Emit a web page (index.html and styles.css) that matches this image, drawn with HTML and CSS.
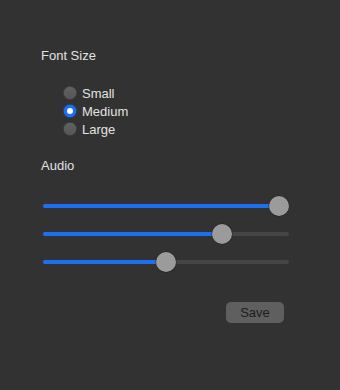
FILE: index.html
```html
<!DOCTYPE html>
<html lang="en">
  <head>
    <meta charset="UTF-8" />
    <meta name="viewport" content="width=device-width, initial-scale=1.0" />
    <title>Preferences</title>

    <link rel="stylesheet" href="styles.css">
  </head>
  <body>
    <div class="prefs">
      <h2 class="title">Font Size</h2>
      <div class="radios">
        <label class="radio"><span class="dot"></span>Small</label>
        <label class="radio checked"><span class="dot"></span>Medium</label>
        <label class="radio"><span class="dot"></span>Large</label>
      </div>

      <h2 class="title audio">Audio</h2>
      <div class="sliders">
        <div class="slider" style="--v: 1"><div class="track"><div class="fill"></div></div><div class="thumb"></div></div>
        <div class="slider" style="--v: 0.748"><div class="track"><div class="fill"></div></div><div class="thumb"></div></div>
        <div class="slider" style="--v: 0.5"><div class="track"><div class="fill"></div></div><div class="thumb"></div></div>
      </div>

      <div class="actions">
        <button class="save">Save</button>
      </div>
    </div>
  </body>
</html>
```

FILE: styles.css
```css
* {
  font-family: "Liberation Sans", Arial, sans-serif;
  box-sizing: border-box;
}

body {
  margin: 0;
  background: #323232;
  color: #e2e2e2;
  height: 390px;
}

.prefs {
  padding: 48px 56px 0 41px;
}

.title {
  margin: 0;
  font-size: 13px;
  font-weight: normal;
  line-height: 16px;
}

.title.audio {
  margin-top: 20px;
}

/* Radios */
.radios {
  display: flex;
  flex-direction: column;
  margin: 20px 0 0 22px;
}

.radio {
  display: flex;
  align-items: center;
  gap: 5px;
  height: 18px;
  font-size: 13px;
}

.dot {
  width: 14px;
  height: 14px;
  border-radius: 50%;
  background: linear-gradient(#626262, #555);
  box-shadow: inset 0 0 0 0.5px #2a2a2a;
  display: flex;
  align-items: center;
  justify-content: center;
}

.checked .dot {
  background: #1d6ff0;
}

.checked .dot::after {
  content: '';
  width: 6px;
  height: 6px;
  border-radius: 50%;
  background: #fff;
}

/* Sliders */
.sliders {
  display: flex;
  flex-direction: column;
  gap: 8px;
  margin: 22px -5px 0 2px;
}

.slider {
  position: relative;
  height: 20px;
  display: flex;
  align-items: center;
}

.track {
  width: 100%;
  height: 4px;
  border-radius: 2px;
  background: #464646;
}

.fill {
  height: 100%;
  border-radius: 2px;
  background: #1d6ff0;
  width: calc(10px + (100% - 20px) * var(--v));
}

.thumb {
  position: absolute;
  top: 0;
  left: calc((100% - 20px) * var(--v));
  width: 20px;
  height: 20px;
  border-radius: 50%;
  background: #9b9b9b;
  box-shadow: 0 0 0 0.5px #222;
}

/* Actions */
.actions {
  display: flex;
  justify-content: flex-end;
  margin-top: 30px;
}

.save {
  width: 58px;
  height: 21px;
  padding: 0;
  border: none;
  border-radius: 5px;
  background: #5f5f5f;
  color: #1c1c1c;
  font-size: 13px;
}
```
